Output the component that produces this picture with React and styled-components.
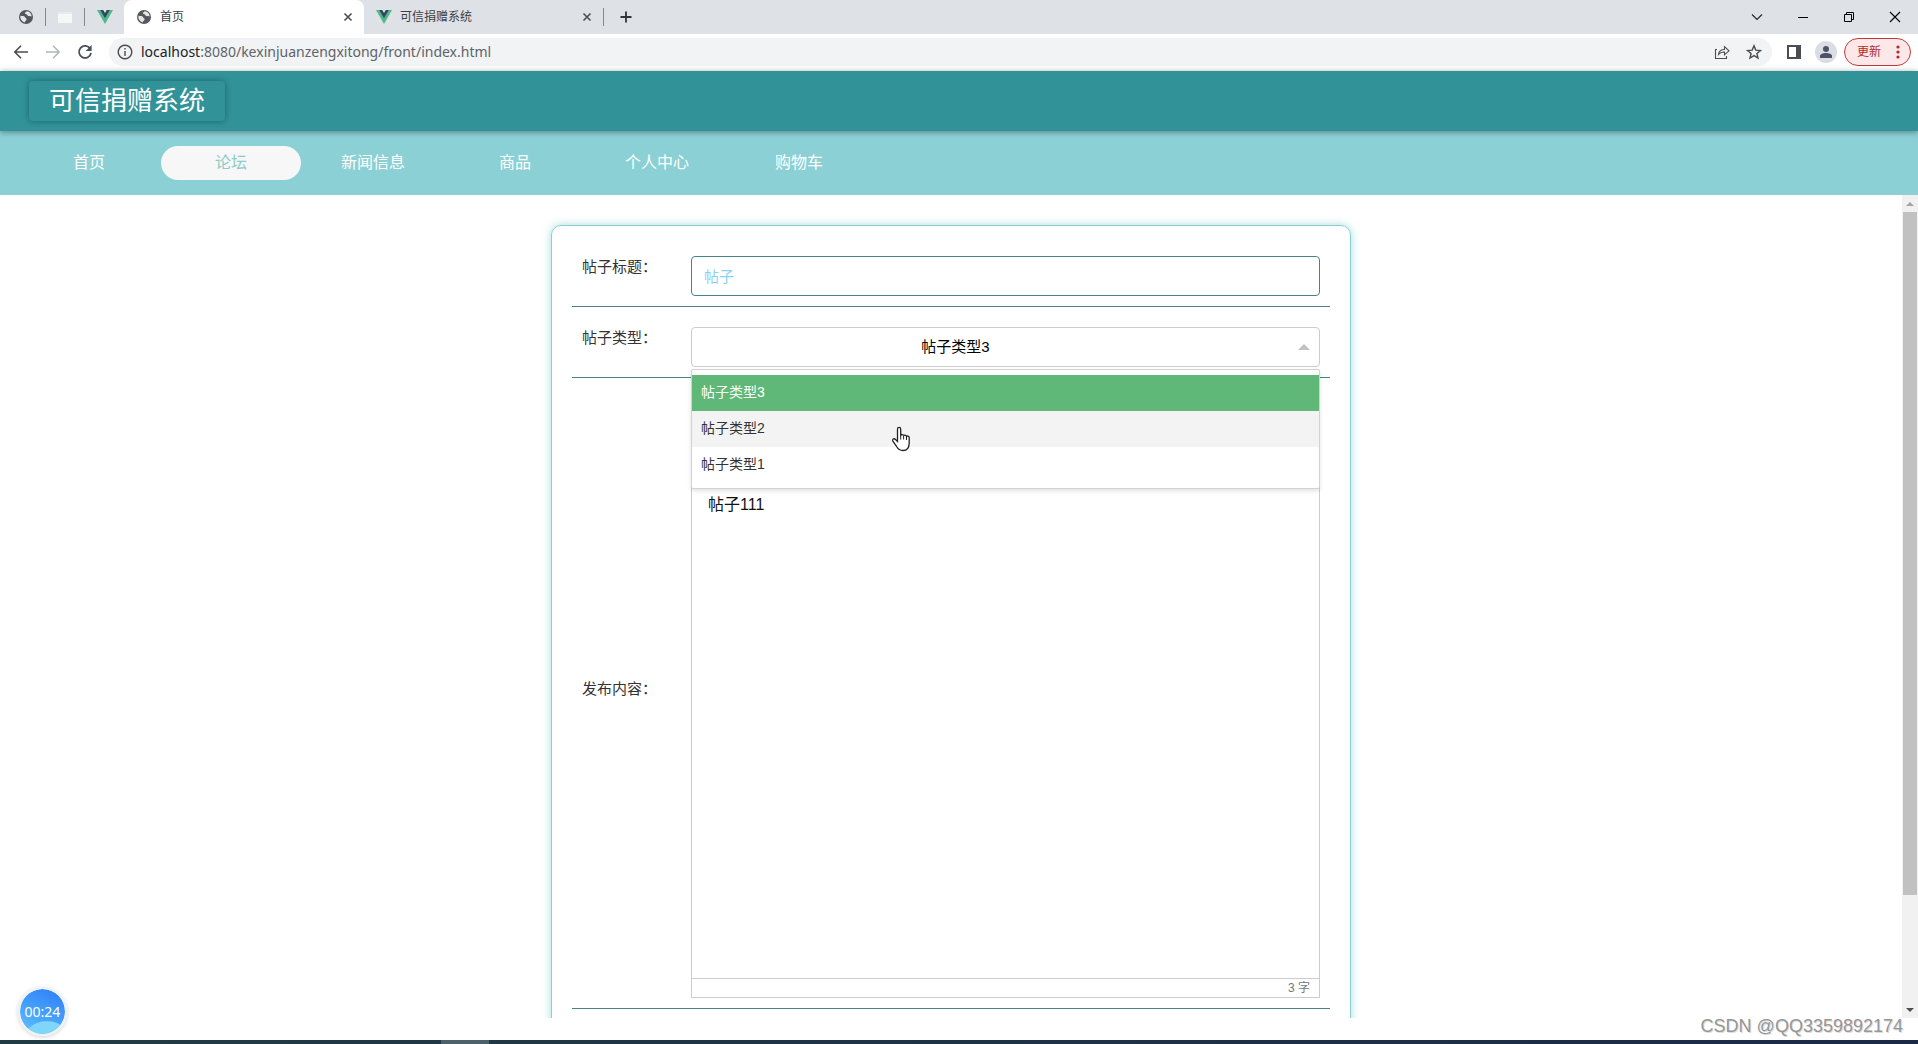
import React from "react";
import styled, { createGlobalStyle, css } from "styled-components";

const sans = `"Liberation Sans", "Noto Sans CJK SC", sans-serif`;
const uiSans = `"Noto Sans", "Noto Sans CJK SC", sans-serif`;

const GlobalStyle = createGlobalStyle`
  *, *::before, *::after { box-sizing: border-box; }
  html, body, #root { height: 100%; margin: 0; }
  body { overflow: hidden; background: #fff; }
  button, input, select { font: inherit; }
  ul { margin: 0; padding: 0; list-style: none; }
`;

const Screen = styled.div`
  display: flex;
  flex-direction: column;
  height: 100%;
  font-family: ${sans};
`;

const IconButton = styled.button`
  display: grid;
  place-items: center;
  flex: none;
  width: ${p => p.$width || 32}px;
  height: 28px;
  padding: 0;
  border: 0;
  background: none;
  color: ${p => p.$color || "#4a4d51"};
`;

/* tab strip */

const TabStrip = styled.div`
  display: flex;
  align-items: center;
  height: 34px;
  padding-left: 7px;
  background: #dee1e6;
  font: 12px/16px ${uiSans};
  color: #3c4043;
`;

const PinnedTab = styled(IconButton)`
  width: 39px;
  height: 18px;
  border-right: ${p => (p.$divided ? "1px solid #85888c" : "0")};
`;

const Tab = styled.div`
  display: flex;
  align-items: center;
  gap: 8px;
  width: 240px;
  height: ${p => (p.$active ? 34 : 18)}px;
  padding: 0 8px 0 12px;
  border-radius: ${p => (p.$active ? "8px 8px 0 0" : "0")};
  border-right: ${p => (p.$active ? "0" : "1px solid #85888c")};
  background: ${p => (p.$active ? "#fff" : "none")};
`;

const TabTitle = styled.span`
  flex: 1;
`;

const WindowControls = styled.div`
  display: flex;
  margin-left: auto;
`;

/* address bar */

const Toolbar = styled.div`
  display: flex;
  align-items: center;
  height: 37px;
  padding: 0 7px 2px 5px;
  background: #fff;
`;

const Omnibox = styled.div`
  display: flex;
  align-items: center;
  flex: 1;
  height: 28px;
  margin: 0 6px 0 8px;
  padding: 0 2px 0 0;
  border-radius: 14px;
  background: #f1f3f4;
`;

const Address = styled.div`
  flex: 1;
  font: 14px/20px ${uiSans};
  color: #5f6368;
  b {
    font-weight: 400;
    color: #202124;
  }
`;

const Avatar = styled.span`
  display: grid;
  place-items: center;
  width: 22px;
  height: 22px;
  border-radius: 50%;
  background: #dadde3;
`;

const UpdateButton = styled.button`
  display: flex;
  align-items: center;
  justify-content: space-between;
  width: 67px;
  height: 28px;
  margin-left: 2px;
  padding: 0 10px 0 12px;
  border: 1px solid #c5383a;
  border-radius: 14px;
  background: #fce8e8;
  color: #b3282d;
  font: 12px/16px ${uiSans};
`;

/* site header */

const Header = styled.header`
  position: relative;
  z-index: 1;
  display: flex;
  align-items: center;
  height: 60px;
  padding: 0 29px;
  background: #319398;
  box-shadow: 0 1px 6px rgba(0, 0, 0, 0.4);
`;

const Brand = styled.h1`
  margin: 0;
  padding: 0 20px;
  border-radius: 4px;
  box-shadow: 0 0 6px rgba(0, 40, 50, 0.45);
  color: #fff;
  font-size: 26px;
  font-weight: 400;
  line-height: 40px;
`;

const Nav = styled.nav`
  display: flex;
  align-items: center;
  gap: 2px;
  height: 64px;
  padding: 0 19px;
  background: #8bd0d5;
`;

const NavLink = styled.a`
  width: 140px;
  border-radius: 17px;
  background: ${p => (p.$active ? "#f7f7f8" : "none")};
  color: ${p => (p.$active ? "#8bcbca" : "#fff")};
  font-size: 16px;
  line-height: 34px;
  text-align: center;
  text-decoration: none;
`;

/* page body */

const Viewport = styled.div`
  display: flex;
  flex: 1;
  min-height: 0;
`;

const Page = styled.main`
  flex: 1;
  overflow: hidden;
  padding-top: 30px;
`;

const Form = styled.form`
  max-width: 800px;
  margin: 0 auto;
  padding: 20px 20px 80px;
  border: 1px solid #8bcfd0;
  border-radius: 10px;
  box-shadow: 0 0 8px rgba(90, 195, 195, 0.55);
`;

const Row = styled.div`
  display: flex;
  align-items: center;
  margin-bottom: 10px;
  padding: 10px;
  border-bottom: 1px solid #468388;
`;

const Label = styled.label`
  width: 109px;
  padding-bottom: 18px;
  color: #333;
  font-size: 15px;
  line-height: 22px;
`;

const field = css`
  display: block;
  width: 100%;
  height: 40px;
  margin: 0;
  border-radius: 4px;
  outline: none;
  background: #fff;
  font-size: 15px;
`;

const TitleInput = styled.input`
  ${field}
  flex: 1;
  padding: 0 12px 2px;
  border: 1px solid #468388;
  color: #8ad2f5;
`;

const SelectWrap = styled.div`
  position: relative;
  flex: 1;
`;

const Select = styled.select`
  ${field}
  appearance: none;
  padding: 0 110px 2px 10px;
  border: 1px solid #ccc;
  color: #000;
  text-align-last: center;
`;

const Arrow = styled.span`
  position: absolute;
  top: 17px;
  right: 10px;
  border: 6px solid transparent;
  border-top: 0;
  border-bottom-color: #c2c2c2;
  pointer-events: none;
`;

const Menu = styled.ul`
  position: absolute;
  top: 42px;
  left: 0;
  z-index: 2;
  width: 100%;
  padding: 5px 0;
  border: 1px solid #d2d2d2;
  border-radius: 2px;
  background: #fff;
  box-shadow: 0 2px 4px rgba(0, 0, 0, 0.12);
`;

const optionColors = {
  selected: css`
    background: #5fb878;
    color: #fff;
  `,
  hover: css`
    background: #f3f3f3;
  `
};

const Option = styled.li`
  padding: 0 9px 2px;
  color: #333;
  font-size: 14px;
  line-height: 34px;
  ${p => optionColors[p.$state]}
`;

const Pointer = styled.svg`
  position: absolute;
  top: 99px;
  left: 200px;
  z-index: 3;
`;

const Editor = styled.div`
  display: flex;
  flex-direction: column;
  flex: 1;
  height: 600px;
  border: 1px solid #ccc;
`;

const EditorTools = styled.div`
  height: 88px;
  border-bottom: 1px solid #ccc;
`;

const EditorBody = styled.div`
  flex: 1;
  padding: 6px 16px;
  outline: none;
  color: #111;
  font-size: 16px;
  line-height: 24px;
`;

const EditorStatus = styled.div`
  height: 19px;
  padding: 0 9px;
  border-top: 1px solid #ccc;
  color: #777;
  font-size: 12px;
  line-height: 18px;
  text-align: right;
`;

const Scrollbar = styled.div`
  display: flex;
  flex-direction: column;
  align-items: center;
  width: 16px;
  background: #f1f1f1;
`;

const ScrollArrow = styled.button`
  display: grid;
  place-items: center;
  flex: none;
  width: 16px;
  height: 17px;
  padding: 0;
  border: 0;
  background: none;
  color: ${p => p.$color};
`;

const Thumb = styled.div`
  width: 14px;
  height: 83%;
  margin-bottom: auto;
  background: #c1c1c1;
`;

/* strip under the page */

const Desk = styled.footer`
  position: relative;
  display: flex;
  align-items: flex-start;
  justify-content: flex-end;
  height: 22px;
  padding-right: 15px;
`;

const Watermark = styled.span`
  color: #969696;
  font-size: 18px;
  line-height: 16px;
  text-shadow: 1px 1px 0 #ddd;
`;

const Recorder = styled.div`
  position: absolute;
  bottom: 4px;
  left: 18px;
  display: grid;
  place-items: center;
  width: 49px;
  height: 49px;
  border: 2px solid #eef2f4;
  border-radius: 50%;
  background: radial-gradient(circle at 60% 130%, #7fd6f8 40%, transparent 42%),
    linear-gradient(25deg, #62c4fb, #46a2fb 45%, #2d7cf8);
  background-clip: padding-box;
  box-shadow: 0 1px 4px rgba(0, 0, 0, 0.18);
  color: #fff;
  font: 14px/20px ${uiSans};
`;

const Taskbar = styled.div`
  height: 4px;
  padding-left: 23%;
  background: linear-gradient(90deg, #213b44, #1b2947);
`;

const TaskItem = styled.div`
  width: 48px;
  height: 4px;
  background: #4c6169;
`;

const Globe = () => (
  <svg width="16" height="16" viewBox="0 0 16 16">
    <circle cx="8" cy="8" r="7" fill="#54585c" />
    <path
      d="M2.4 6.8c2 .3 4.4 .2 4.7 1.4.3 1.2 1.7 1 1.5 2.3-.2 1.2-1.7 1.3-1.8 3A5.8 5.8 0 0 1 2.4 6.8zM8.6 2.3c-.3 1-1.8.8-1.7 1.9.1 1 1.7.6 2.1 1.5.5 1 1.5 1.6 2.6 1.4.8-.1 1.5.4 2.1.5a5.8 5.8 0 0 0-5.1-5.3z"
      fill="#e4e6e9"
    />
  </svg>
);

const Vue = () => (
  <svg width="16" height="16" viewBox="0 0 16 16">
    <path d="M0 1h3.5L8 8.5 12.500 1H16L8 15z" fill="#4db88c" />
    <path d="M3.2 1h3L8 4l1.800-3h3L8 9.300z" fill="#31475b" />
  </svg>
);

const BlankPage = () => (
  <svg width="16" height="16" viewBox="0 0 16 16">
    <path d="M1 3h14v11H1z" fill="#f7f7f8" />
    <path d="M1 3h14v2H1z" fill="#e9eaec" />
  </svg>
);

const Line = ({ d, size = 16, width = 1.6 }) => (
  <svg
    width={size}
    height={size}
    viewBox="0 0 16 16"
    fill="none"
    stroke="currentColor"
    strokeWidth={width}
  >
    <path d={d} />
  </svg>
);

const Triangle = ({ d }) => (
  <svg width="8" height="4" viewBox="0 0 8 4">
    <path d={d} fill="currentColor" />
  </svg>
);

const CLOSE = "M4.5 4.5l7 7M11.5 4.5l-7 7";

const Browser = () => (
  <>
    <TabStrip>
      <PinnedTab $divided aria-label="Globe tab">
        <Globe />
      </PinnedTab>
      <PinnedTab $divided aria-label="Blank tab">
        <BlankPage />
      </PinnedTab>
      <PinnedTab aria-label="Vue tab">
        <Vue />
      </PinnedTab>
      <Tab $active>
        <Globe />
        <TabTitle>首页</TabTitle>
        <IconButton $width={16} aria-label="Close tab">
          <Line d={CLOSE} />
        </IconButton>
      </Tab>
      <Tab>
        <Vue />
        <TabTitle>可信捐赠系统</TabTitle>
        <IconButton $width={16} aria-label="Close tab">
          <Line d={CLOSE} />
        </IconButton>
      </Tab>
      <IconButton $width={44} $color="#303236" aria-label="New tab">
        <Line d="M8 2.5v11M2.5 8h11" width={1.8} />
      </IconButton>
      <WindowControls>
        <IconButton $width={46} $color="#222" aria-label="Search tabs">
          <Line d="M3 5.5l5 5 5-5" width={1.1} />
        </IconButton>
        <IconButton $width={46} $color="#000" aria-label="Minimize">
          <Line d="M3 8.5h10" width={1} />
        </IconButton>
        <IconButton $width={46} $color="#000" aria-label="Restore">
          <Line d="M3.5 5.5h7v7h-7zM5.5 5.5v-2h7v7h-2" width={1} />
        </IconButton>
        <IconButton $width={46} $color="#000" aria-label="Close">
          <Line d="M3 3l10 10M13 3L3 13" width={1.1} />
        </IconButton>
      </WindowControls>
    </TabStrip>
    <Toolbar>
      <IconButton aria-label="Back">
        <Line d="M15 8H2M8 1.8L1.8 8 8 14.2" />
      </IconButton>
      <IconButton $color="#b4b6b9" aria-label="Forward">
        <Line d="M1 8h13M8 1.8L14.2 8 8 14.2" />
      </IconButton>
      <IconButton aria-label="Reload">
        <svg width="16" height="16" viewBox="0 0 16 16">
          <path
            d="M13.2 4.8A6 6 0 1 0 14 8.8"
            fill="none"
            stroke="currentColor"
            strokeWidth="1.8"
          />
          <path d="M14.6 1v6H8.6z" fill="currentColor" />
        </svg>
      </IconButton>
      <Omnibox>
        <IconButton aria-label="Site information">
          <Line
            d="M8 1.3a6.7 6.7 0 1 0 .01 0zM8 7v5M8 4v1.6"
            width={1.4}
          />
        </IconButton>
        <Address>
          <b>localhost</b>:8080/kexinjuanzengxitong/front/index.html
        </Address>
        <IconButton aria-label="Share">
          <Line
            d="M3 5.5H1.5v9h11V12M4.5 10.5c.3-3.5 2.5-5 6-5V2.7L15 6.8l-4.5 4V8c-2.8 0-4.6.7-6 2.5z"
            width={1.1}
          />
        </IconButton>
        <IconButton aria-label="Bookmark">
          <Line
            d="M8 1.8l1.8 4.3 4.7.4-3.6 3 1.1 4.6-4-2.5-4 2.5 1.1-4.6-3.6-3 4.7-.4z"
            width={1.4}
          />
        </IconButton>
      </Omnibox>
      <IconButton aria-label="Side panel">
        <svg width="16" height="16" viewBox="0 0 16 16">
          <path
            fillRule="evenodd"
            d="M1 1h14v14H1zM3 3v10h7V3z"
            fill="currentColor"
          />
        </svg>
      </IconButton>
      <IconButton aria-label="Profile">
        <Avatar>
          <svg width="14" height="14" viewBox="0 0 14 14">
            <circle cx="7" cy="4" r="3" fill="#4c5367" />
            <path d="M1 13v-2c0-2 3-3 6-3s6 1 6 3v2z" fill="#4c5367" />
          </svg>
        </Avatar>
      </IconButton>
      <UpdateButton>
        更新
        <svg width="4" height="14" viewBox="0 0 4 14" fill="currentColor">
          <circle cx="2" cy="2" r="1.6" />
          <circle cx="2" cy="7" r="1.6" />
          <circle cx="2" cy="12" r="1.6" />
        </svg>
      </UpdateButton>
    </Toolbar>
  </>
);

const links = ["首页", "论坛", "新闻信息", "商品", "个人中心", "购物车"];

const types = [
  { name: "帖子类型3", state: "selected" },
  { name: "帖子类型2", state: "hover" },
  { name: "帖子类型1" }
];

const TypeSelect = () => (
  <SelectWrap>
    <Select id="type" defaultValue={types[0].name}>
      {types.map(t => (
        <option key={t.name}>{t.name}</option>
      ))}
    </Select>
    <Arrow />
    <Menu role="listbox">
      {types.map(t => (
        <Option
          key={t.name}
          role="option"
          aria-selected={t.state === "selected"}
          $state={t.state}
        >
          {t.name}
        </Option>
      ))}
    </Menu>
    <Pointer width="20" height="26" viewBox="0 0 20 26">
      <path
        d="M6.5 15.5V3.2c0-2.4 3.2-2.4 3.2 0v6.3c.3-1.4 2.8-1.3 2.9.3.5-1.1 2.8-.9 2.9.7.7-.9 2.7-.6 2.7 1.1v5.4c0 4.5-2.2 7.5-6.2 7.5-3.5 0-5-1.5-6.6-4.3L2 15.5c-1.3-2.3 1-3.6 2.5-2z"
        fill="#fff"
        stroke="#222"
        strokeWidth="1.3"
      />
      <path d="M9.7 9v4.5M12.6 10v3.5M15.5 11v3" stroke="#222" />
    </Pointer>
  </SelectWrap>
);

const App = () => (
  <Screen>
    <GlobalStyle />
    <Browser />
    <Header>
      <Brand>可信捐赠系统</Brand>
    </Header>
    <Nav>
      {links.map(name => (
        <NavLink key={name} href="#" $active={name === "论坛"}>
          {name}
        </NavLink>
      ))}
    </Nav>
    <Viewport>
      <Page>
        <Form>
          <Row>
            <Label htmlFor="title">帖子标题：</Label>
            <TitleInput id="title" defaultValue="帖子" />
          </Row>
          <Row>
            <Label htmlFor="type">帖子类型：</Label>
            <TypeSelect />
          </Row>
          <Row>
            <Label id="content-label" as="span">
              发布内容：
            </Label>
            <Editor>
              <EditorTools />
              <EditorBody
                role="textbox"
                aria-multiline="true"
                aria-labelledby="content-label"
                contentEditable
                suppressContentEditableWarning
              >
                帖子111
              </EditorBody>
              <EditorStatus>3 字</EditorStatus>
            </Editor>
          </Row>
        </Form>
      </Page>
      <Scrollbar>
        <ScrollArrow $color="#a3a3a3" aria-label="Scroll up">
          <Triangle d="M0 4l4-4 4 4z" />
        </ScrollArrow>
        <Thumb />
        <ScrollArrow $color="#505050" aria-label="Scroll down">
          <Triangle d="M0 0h8L4 4z" />
        </ScrollArrow>
      </Scrollbar>
    </Viewport>
    <Desk>
      <Recorder>00:24</Recorder>
      <Watermark>CSDN @QQ3359892174</Watermark>
    </Desk>
    <Taskbar>
      <TaskItem />
    </Taskbar>
  </Screen>
);

export default App;
